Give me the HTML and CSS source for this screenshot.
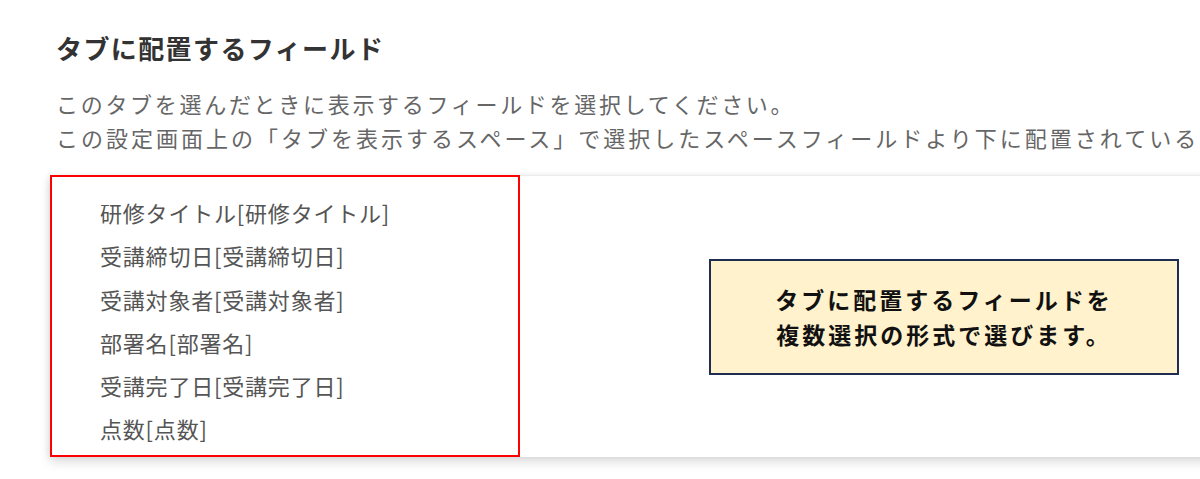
FILE: index.html
```html
<!DOCTYPE html>
<html lang="ja">
<head>
<meta charset="utf-8">
<title>タブに配置するフィールド</title>
<link rel="stylesheet" href="styles.css">
</head>
<body>
<main class="page">
  <h2 class="title">タブに配置するフィールド</h2>
  <p class="desc">このタブを選んだときに表示するフィールドを選択してください。<br><span class="wide">この設定画面上の「タブを表示するスペース」で選択したスペースフィールドより下に配置されている</span></p>
  <section class="panel">
    <ul class="field-list">
      <li>研修タイトル[研修タイトル]</li>
      <li>受講締切日[受講締切日]</li>
      <li>受講対象者[受講対象者]</li>
      <li>部署名[部署名]</li>
      <li>受講完了日[受講完了日]</li>
      <li>点数[点数]</li>
    </ul>
    <div class="note">タブに配置するフィールドを<br>複数選択の形式で選びます。</div>
  </section>
</main>
</body>
</html>
```

FILE: styles.css
```css
html, body {
  margin: 0;
  padding: 0;
  background: #ffffff;
  overflow: hidden;
}

body {
  width: 1200px;
  height: 479px;
  font-family: "Noto Sans CJK JP", "Noto Sans", sans-serif;
}

.page {
  padding-top: 28px;
}

.title {
  margin: 0 0 18px 56px;
  font-size: 26px;
  line-height: 40px;
  font-weight: 700;
  color: #333333;
  letter-spacing: 1.4px;
}

.desc {
  margin: 0 0 21px 56px;
  font-size: 22px;
  line-height: 34px;
  color: #666666;
  letter-spacing: 2.7px;
  white-space: nowrap;
}

.desc .wide {
  letter-spacing: 3px;
}

.panel {
  margin-left: 50px;
  width: 1200px;
  height: 282px;
  display: flex;
  align-items: center;
  background: #ffffff;
  border-top: 1px solid #ececec;
  box-sizing: border-box;
  box-shadow: 0 5px 10px rgba(0, 0, 0, 0.14), -2px 0 6px rgba(0, 0, 0, 0.05);
}

.field-list {
  list-style: none;
  margin: -1px 0 0 0;
  padding: 14px 0 6px 48px;
  width: 470px;
  height: 282px;
  box-sizing: border-box;
  border: 2px solid #ff0000;
  align-self: flex-start;
}

.field-list li {
  font-size: 22px;
  line-height: 43.3px;
  color: #555555;
  letter-spacing: 0.8px;
  white-space: nowrap;
}

.note {
  margin-left: 189px;
  width: 470px;
  height: 116px;
  box-sizing: border-box;
  background: #fff2cc;
  border: 2px solid #1f2d4e;
  display: flex;
  align-items: center;
  justify-content: center;
  text-align: center;
  font-size: 23px;
  line-height: 35px;
  font-weight: 700;
  color: #111111;
  letter-spacing: 3px;
}
```
